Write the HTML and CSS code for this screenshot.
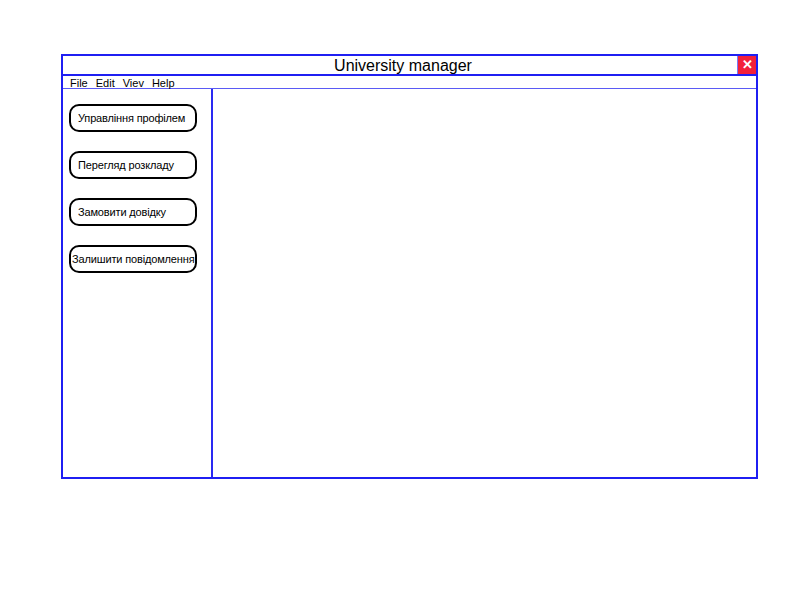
FILE: index.html
```html
<!DOCTYPE html>
<html lang="uk">
<head>
    <meta charset="UTF-8">
    <title>University manager</title>
    <link rel="stylesheet" href="styles.css">
</head>
<body>
    <div class="window">
        <div class="title-bar">
            <div class="title">University manager</div>
            <div class="close-btn">&#x2715;</div>
        </div>
        <div class="menu-bar">
            <span>File</span>
            <span>Edit</span>
            <span>Viev</span>
            <span>Help</span>
        </div>
        <div class="main">
            <div class="sidebar">
                <div class="nav-btn">Управління профілем</div>
                <div class="nav-btn">Перегляд розкладу</div>
                <div class="nav-btn">Замовити довідку</div>
                <div class="nav-btn wide">Залишити повідомлення</div>
            </div>
            <div class="content"></div>
        </div>
    </div>
</body>
</html>
```

FILE: styles.css
```css
body {
    margin: 0;
    background: #fff;
    font-family: "Liberation Sans", Arial, sans-serif;
    color: #000;
}

.window {
    margin: 54px 0 0 61px;
    width: 693px;
    height: 421px;
    border: 2px solid #1f1ff2;
    display: flex;
    flex-direction: column;
}

.title-bar {
    display: flex;
    height: 18px;
    border-bottom: 2px solid #1f1ff2;
}

.title {
    flex: 1;
    text-align: center;
    font-size: 16px;
    line-height: 19px;
    padding-left: 6px;
    border-right: 1px solid #7a7af5;
}

.close-btn {
    width: 18px;
    height: 18px;
    background: #f2203a;
    color: #fff;
    font-size: 13px;
    font-weight: bold;
    line-height: 18px;
    text-align: center;
}

.menu-bar {
    height: 11px;
    padding: 1px 0 0 7px;
    border-bottom: 1px solid #5a5af5;
    font-size: 11px;
    line-height: 12px;
    display: flex;
    gap: 8px;
}

.main {
    flex: 1;
    display: flex;
}

.sidebar {
    width: 142px;
    border-right: 2px solid #2a2af2;
    display: flex;
    flex-direction: column;
    align-items: flex-start;
    gap: 19px;
    padding: 15px 0 0 6px;
}

.nav-btn {
    width: 117px;
    height: 24px;
    border: 2px solid #000;
    border-radius: 10px;
    font-size: 11px;
    line-height: 24px;
    letter-spacing: -0.15px;
    padding-left: 7px;
    white-space: nowrap;
}

.nav-btn.wide {
    padding-left: 1px;
    width: 123px;
}

.content {
    flex: 1;
}
```
